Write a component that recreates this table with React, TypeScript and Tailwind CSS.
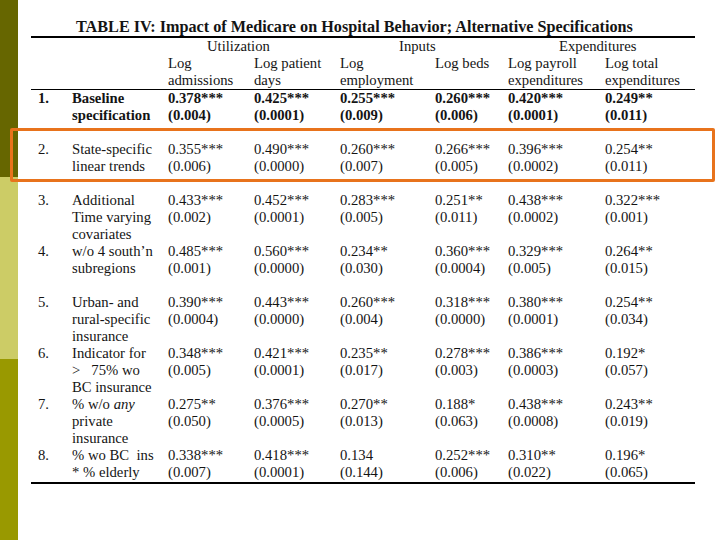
import React from "react";

type Row = {
  n: string;
  label: React.ReactNode[];
  vals: [string, string][];
  bold?: boolean;
  h: string;
};

const rows: Row[] = [
  {
    n: "1.",
    label: ["Baseline", "specification"],
    vals: [
      ["0.378***", "(0.004)"],
      ["0.425***", "(0.0001)"],
      ["0.255***", "(0.009)"],
      ["0.260***", "(0.006)"],
      ["0.420***", "(0.0001)"],
      ["0.249**", "(0.011)"],
    ],
    bold: true,
    h: "h-[51px]",
  },
  {
    n: "2.",
    label: ["State-specific", "linear trends"],
    vals: [
      ["0.355***", "(0.006)"],
      ["0.490***", "(0.0000)"],
      ["0.260***", "(0.007)"],
      ["0.266***", "(0.005)"],
      ["0.396***", "(0.0002)"],
      ["0.254**", "(0.011)"],
    ],
    h: "h-[51px]",
  },
  {
    n: "3.",
    label: ["Additional", "Time varying", "covariates"],
    vals: [
      ["0.433***", "(0.002)"],
      ["0.452***", "(0.0001)"],
      ["0.283***", "(0.005)"],
      ["0.251**", "(0.011)"],
      ["0.438***", "(0.0002)"],
      ["0.322***", "(0.001)"],
    ],
    h: "h-[51px]",
  },
  {
    n: "4.",
    label: ["w/o 4 south\u2019n", "subregions"],
    vals: [
      ["0.485***", "(0.001)"],
      ["0.560***", "(0.0000)"],
      ["0.234**", "(0.030)"],
      ["0.360***", "(0.0004)"],
      ["0.329***", "(0.005)"],
      ["0.264**", "(0.015)"],
    ],
    h: "h-[51px]",
  },
  {
    n: "5.",
    label: ["Urban- and", "rural-specific", "insurance"],
    vals: [
      ["0.390***", "(0.0004)"],
      ["0.443***", "(0.0000)"],
      ["0.260***", "(0.004)"],
      ["0.318***", "(0.0000)"],
      ["0.380***", "(0.0001)"],
      ["0.254**", "(0.034)"],
    ],
    h: "h-[51px]",
  },
  {
    n: "6.",
    label: ["Indicator for", ">   75% wo", "BC insurance"],
    vals: [
      ["0.348***", "(0.005)"],
      ["0.421***", "(0.0001)"],
      ["0.235**", "(0.017)"],
      ["0.278***", "(0.003)"],
      ["0.386***", "(0.0003)"],
      ["0.192*", "(0.057)"],
    ],
    h: "h-[51px]",
  },
  {
    n: "7.",
    label: [
      <span key="a">
        % w/o <i>any</i>
      </span>,
      "private",
      "insurance",
    ],
    vals: [
      ["0.275**", "(0.050)"],
      ["0.376***", "(0.0005)"],
      ["0.270**", "(0.013)"],
      ["0.188*", "(0.063)"],
      ["0.438***", "(0.0008)"],
      ["0.243**", "(0.019)"],
    ],
    h: "h-[51px]",
  },
  {
    n: "8.",
    label: ["% wo BC  ins", "* % elderly"],
    vals: [
      ["0.338***", "(0.007)"],
      ["0.418***", "(0.0001)"],
      ["0.134", "(0.144)"],
      ["0.252***", "(0.006)"],
      ["0.310**", "(0.022)"],
      ["0.196*", "(0.065)"],
    ],
    h: "h-[35px]",
  },
];

const grid =
  "grid grid-cols-[41px_96px_86px_86px_95px_73px_97px_90px]";

export default function App() {
  return (
    <div
      className="relative flex w-[720px] h-[540px] bg-white overflow-hidden text-[#141414]"
      style={{ fontFamily: '"Liberation Serif", "Times New Roman", serif' }}
    >
      <div className="flex flex-col w-[18px] shrink-0">
        <div className="h-[177px] bg-[#666600]" />
        <div className="h-[182px] bg-[#cccc66]" />
        <div className="flex-1 bg-[#999900]" />
      </div>

      <div className="ml-[13px] w-[664px] pt-[18px]">
        <div className="h-[18px] pl-[45px] text-[16.2px] font-bold leading-[18px] whitespace-nowrap">
          TABLE IV: Impact of Medicare on Hospital Behavior; Alternative Specifications
        </div>
        <div className="h-[2px] bg-black" />

        <div className={`${grid} text-[14.7px] leading-[17px]`}>
          <div className="col-span-2 h-[17px]" />
          <div className="col-span-2 pl-[39px] whitespace-nowrap">Utilization</div>
          <div className="col-span-2 pl-[59px] whitespace-nowrap">Inputs</div>
          <div className="col-span-2 pl-[51px] whitespace-nowrap">Expenditures</div>

          <div className="col-span-2" />
          <div className="flex flex-col">
            <span>Log</span>
            <span>admissions</span>
          </div>
          <div className="flex flex-col">
            <span>Log patient</span>
            <span>days</span>
          </div>
          <div className="flex flex-col whitespace-nowrap">
            <span>Log</span>
            <span>employment</span>
          </div>
          <div className="flex flex-col">
            <span>Log beds</span>
          </div>
          <div className="flex flex-col whitespace-nowrap">
            <span>Log payroll</span>
            <span>expenditures</span>
          </div>
          <div className="flex flex-col whitespace-nowrap">
            <span>Log total</span>
            <span>expenditures</span>
          </div>
        </div>
        <div className="h-[1px] bg-black" />

        {rows.map((r) => (
          <div
            key={r.n}
            className={`${grid} ${r.h} text-[14.7px] leading-[17px] ${
              r.bold ? "font-bold" : ""
            }`}
          >
            <div className="pl-[7px]">{r.n}</div>
            <div className="flex flex-col whitespace-pre">
              {r.label.map((l, i) => (
                <span key={i}>{l}</span>
              ))}
            </div>
            {r.vals.map(([a, b], i) => (
              <div key={i} className="flex flex-col whitespace-nowrap">
                <span>{a}</span>
                <span>{b}</span>
              </div>
            ))}
          </div>
        ))}
        <div className="h-[2px] bg-black" />
      </div>

      <div className="absolute left-[10px] top-[128px] w-[705px] h-[54px] border-[3px] border-[#e8731c] rounded-[2px]" />
    </div>
  );
}
